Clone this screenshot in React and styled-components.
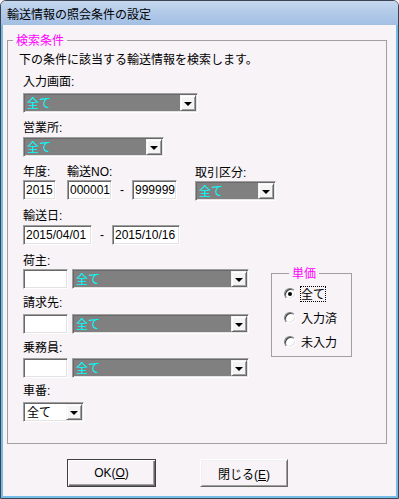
import React from 'react';
import styled, { createGlobalStyle } from 'styled-components';

const GlobalStyle = createGlobalStyle`
  * { box-sizing: border-box; }
  html, body {
    margin: 0;
    padding: 0;
    background: #f7f3f7;
  }
  body {
    font-family: "Liberation Sans", "Noto Sans CJK JP", sans-serif;
    font-size: 12px;
    color: #000;
  }
`;

const sunken = `
  border: 1px solid;
  border-color: #a0a0a0 #ffffff #ffffff #a0a0a0;
  box-shadow: inset 1px 1px 0 #696969, inset -1px -1px 0 #e3e3e3;
`;

const App = () => {
  return (
    <>
      <GlobalStyle />
      <Window>
        <TitleBar>輸送情報の照会条件の設定</TitleBar>
        <Frame>
          <Group>
            <Legend $ml={5}>検索条件</Legend>
            <GroupInner>
              <Description>下の条件に該当する輸送情報を検索します。</Description>
              <Fields>
                <Label $mt={11}>入力画面:</Label>
                <Combo $w={175} $mt={5} value="全て" />

                <Label $mt={9}>営業所:</Label>
                <Combo $w={141} $mt={3} value="全て" />

                <Row $mt={9}>
                  <Col $w={44}>
                    <Label>年度:</Label>
                    <TextBox $w={33} $mt={2}>2015</TextBox>
                  </Col>
                  <Col $w={128}>
                    <Label>輸送NO:</Label>
                    <Inline $mt={2}>
                      <TextBox $w={45}>000001</TextBox>
                      <Dash>-</Dash>
                      <TextBox $w={45}>999999</TextBox>
                    </Inline>
                  </Col>
                  <Col $mt={1}>
                    <Label>取引区分:</Label>
                    <Combo $w={81} $mt={2} value="全て" />
                  </Col>
                </Row>

                <Label $mt={9}>輸送日:</Label>
                <Inline $mt={3}>
                  <TextBox $w={69}>2015/04/01</TextBox>
                  <Dash>-</Dash>
                  <TextBox $w={68}>2015/10/16</TextBox>
                </Inline>

                <Lower>
                  <LeftCol>
                    <Label $mt={10}>荷主:</Label>
                    <CodeRow $mt={2}>
                      <TextBox $w={45} />
                      <Combo $w={177} value="全て" />
                    </CodeRow>

                    <Label $mt={8}>請求先:</Label>
                    <CodeRow $mt={5}>
                      <TextBox $w={45} />
                      <Combo $w={177} value="全て" />
                    </CodeRow>

                    <Label $mt={8}>乗務員:</Label>
                    <CodeRow $mt={4}>
                      <TextBox $w={45} />
                      <Combo $w={177} value="全て" />
                    </CodeRow>

                    <Label $mt={7}>車番:</Label>
                    <Combo $w={61} $mt={5} $light value="全て" />
                  </LeftCol>

                  <PriceGroup>
                    <Legend $ml={5}>単価</Legend>
                    <RadioList>
                      <RadioRow>
                        <RadioDot $checked />
                        <Focus>全て</Focus>
                      </RadioRow>
                      <RadioRow>
                        <RadioDot />
                        <RadioText>入力済</RadioText>
                      </RadioRow>
                      <RadioRow>
                        <RadioDot />
                        <RadioText>未入力</RadioText>
                      </RadioRow>
                    </RadioList>
                  </PriceGroup>
                </Lower>
              </Fields>
            </GroupInner>
          </Group>

          <Buttons>
            <Button $default>OK(<u>O</u>)</Button>
            <Button>閉じる(<u>E</u>)</Button>
          </Buttons>
        </Frame>
      </Window>
    </>
  );
};

const Combo = ({ value, $w, $mt, $light }) => (
  <ComboBox $w={$w} $mt={$mt} $light={$light}>
    <ComboValue $light={$light}>{value}</ComboValue>
    <DropButton><Arrow /></DropButton>
  </ComboBox>
);

export default App;

const Window = styled.div`
  width: 399px;
  height: 499px;
  display: flex;
  flex-direction: column;
  border: 1px solid #3b4552;
  border-radius: 6px 6px 0 0;
  overflow: hidden;
  background: #f7f3f7;
`;

const TitleBar = styled.div`
  height: 24px;
  flex-shrink: 0;
  display: flex;
  align-items: center;
  padding: 1px 0 0 6px;
  background: linear-gradient(#c6d8ee 0%, #b3cbe9 45%, #a2bfe4 100%);
  font-family: "Noto Sans CJK JP", sans-serif;
  font-size: 12px;
  color: #000;
`;

const Frame = styled.div`
  flex: 1;
  display: flex;
  flex-direction: column;
  border: 2px solid #74bde6;
  border-top: 0;
  background: #f7f3f7;
`;

const Group = styled.fieldset`
  margin: 8px 9px 0 4px;
  padding: 0 0 21px 0;
  border: 1px solid #a0a0a0;
  min-width: 0;
`;

const Legend = styled.legend`
  margin-left: ${({ $ml }) => $ml}px;
  padding: 0 3px;
  line-height: 14px;
  font-family: "Noto Sans CJK JP", sans-serif;
  color: #ff00ff;
`;

const GroupInner = styled.div`
  padding: 6px 0 0 11px;
`;

const Description = styled.div`
  line-height: 12px;
  font-family: "Noto Sans CJK JP", sans-serif;
`;

const Fields = styled.div`
  display: flex;
  flex-direction: column;
  align-items: flex-start;
  padding-left: 4px;
`;

const Label = styled.div`
  margin-top: ${({ $mt }) => $mt || 0}px;
  line-height: 12px;
  white-space: nowrap;
`;

const Row = styled.div`
  display: flex;
  margin-top: ${({ $mt }) => $mt || 0}px;
`;

const Col = styled.div`
  display: flex;
  flex-direction: column;
  align-items: flex-start;
  width: ${({ $w }) => ($w ? `${$w}px` : 'auto')};
  margin-top: ${({ $mt }) => $mt || 0}px;
`;

const Inline = styled.div`
  display: flex;
  align-items: center;
  margin-top: ${({ $mt }) => $mt || 0}px;
`;

const CodeRow = styled.div`
  display: flex;
  gap: 4px;
  margin-top: ${({ $mt }) => $mt || 0}px;
`;

const Dash = styled.span`
  width: 20px;
  text-align: center;
  line-height: 12px;
`;

const TextBox = styled.div`
  ${sunken}
  width: ${({ $w }) => $w}px;
  height: 20px;
  margin-top: ${({ $mt }) => $mt || 0}px;
  padding: 1px 0 0 2px;
  background: #fff;
  line-height: 16px;
  white-space: nowrap;
  overflow: hidden;
`;

const ComboBox = styled.div`
  ${sunken}
  display: flex;
  width: ${({ $w }) => $w}px;
  height: 20px;
  margin-top: ${({ $mt }) => $mt || 0}px;
  padding: 1px;
  background: ${({ $light }) => ($light ? '#ffffff' : '#808080')};
`;

const ComboValue = styled.div`
  flex: 1;
  padding-left: 2px;
  line-height: 16px;
  font-family: "Noto Sans CJK JP", sans-serif;
  color: ${({ $light }) => ($light ? '#000000' : '#00ffff')};
  white-space: nowrap;
  overflow: hidden;
`;

const DropButton = styled.div`
  width: 16px;
  height: 16px;
  display: flex;
  align-items: center;
  justify-content: center;
  background: #f4f4f4;
  border: 1px solid;
  border-color: #f4f4f4 #696969 #696969 #f4f4f4;
  box-shadow: inset 1px 1px 0 #ffffff, inset -1px -1px 0 #a0a0a0;
`;

const Arrow = styled.span`
  width: 0;
  height: 0;
  margin-top: 1px;
  border-left: 4px solid transparent;
  border-right: 4px solid transparent;
  border-top: 4px solid #000;
`;

const Lower = styled.div`
  display: flex;
  align-items: flex-start;
`;

const LeftCol = styled.div`
  display: flex;
  flex-direction: column;
  align-items: flex-start;
  width: 225px;
`;

const PriceGroup = styled.fieldset`
  width: 81px;
  margin: 21px 0 0 23px;
  padding: 2px 0 2px 12px;
  border: 1px solid #a0a0a0;
  min-width: 0;
`;

const RadioList = styled.div`
  display: flex;
  flex-direction: column;
`;

const RadioRow = styled.div`
  display: flex;
  align-items: center;
  height: 24px;
  gap: 4px;
  font-family: "Noto Sans CJK JP", sans-serif;
`;

const RadioDot = styled.span`
  position: relative;
  width: 12px;
  height: 12px;
  flex-shrink: 0;
  border-radius: 50%;
  border: 1px solid;
  border-color: #808080 #ffffff #ffffff #808080;
  box-shadow: inset 1px 1px 0 #404040, inset -1px -1px 0 #e3e3e3;
  background: #fff;

  &::after {
    content: '';
    display: ${({ $checked }) => ($checked ? 'block' : 'none')};
    position: absolute;
    left: 3px;
    top: 3px;
    width: 4px;
    height: 4px;
    border-radius: 50%;
    background: #000;
  }
`;

const RadioText = styled.span`
  line-height: 14px;
  padding: 0 1px;
`;

const Focus = styled.span`
  line-height: 14px;
  border: 1px dotted #000;
`;

const Buttons = styled.div`
  display: flex;
  gap: 44px;
  margin-top: 15px;
  padding-left: 64px;
`;

const Button = styled.button`
  width: ${({ $default }) => ($default ? 89 : 88)}px;
  height: 28px;
  padding: 0;
  background: #f7f3f7;
  font-family: "Liberation Sans", "Noto Sans CJK JP", sans-serif;
  font-size: 12px;
  color: #000;
  border: 1px solid;
  border-color: ${({ $default }) =>
    $default ? '#404040' : '#ffffff #696969 #696969 #ffffff'};
  box-shadow: ${({ $default }) =>
    $default
      ? 'inset 1px 1px 0 #ffffff, inset -1px -1px 0 #696969, inset -2px -2px 0 #a0a0a0'
      : 'inset 1px 1px 0 #f0f0f0, inset -1px -1px 0 #a0a0a0'};

  u {
    text-decoration: underline;
    text-underline-offset: 1px;
  }
`;
